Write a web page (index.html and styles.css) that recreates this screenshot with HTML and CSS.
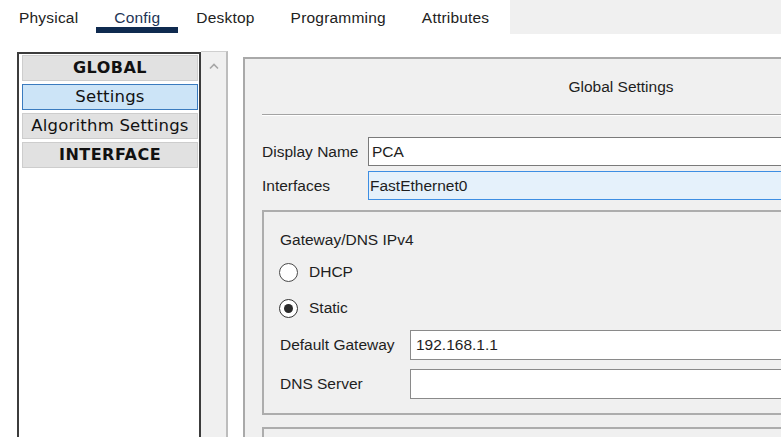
FILE: index.html
```html
<!DOCTYPE html>
<html>
<head>
<meta charset="utf-8">
<link rel="stylesheet" href="styles.css">
</head>
<body>
<div class="tabs">
  <div class="tab-strip">
    <div class="tab">Physical</div>
    <div class="tab active">Config</div>
    <div class="tab">Desktop</div>
    <div class="tab">Programming</div>
    <div class="tab">Attributes</div>
  </div>
  <div class="tab-fill"></div>
</div>
<div class="main">
  <div class="list">
    <div class="item head">GLOBAL</div>
    <div class="item sel">Settings</div>
    <div class="item">Algorithm Settings</div>
    <div class="item head">INTERFACE</div>
  </div>
  <div class="scroll">
    <svg class="chev" width="12" height="8" viewBox="0 0 12 8"><path d="M2 6.5 L6 2.5 L10 6.5" fill="none" stroke="#a6a6a6" stroke-width="1.6"/></svg>
  </div>
  <div class="panel">
    <div class="panel-title">Global Settings</div>
    <div class="row first">
      <span class="lbl">Display Name</span>
      <div class="field name">PCA</div>
    </div>
    <div class="row">
      <span class="lbl">Interfaces</span>
      <div class="field select">FastEthernet0</div>
    </div>
    <div class="group">
      <div class="group-title">Gateway/DNS IPv4</div>
      <div class="radio-row"><span class="radio"></span><span>DHCP</span></div>
      <div class="radio-row"><span class="radio on"></span><span>Static</span></div>
      <div class="row gw">
        <span class="lbl wide">Default Gateway</span>
        <div class="field ip">192.168.1.1</div>
      </div>
      <div class="row dns">
        <span class="lbl wide">DNS Server</span>
        <div class="field ip"></div>
      </div>
    </div>
    <div class="group next"></div>
  </div>
</div>
</body>
</html>
```
FILE: styles.css
```css
html, body {
  margin: 0;
  padding: 0;
  width: 781px;
  height: 437px;
  overflow: hidden;
  background: #ffffff;
}
body {
  font-family: "Liberation Sans", Arial, sans-serif;
  font-size: 15.5px;
  color: #1e1e1e;
}
.tabs {
  display: flex;
  height: 34px;
}
.tab-strip {
  width: 509px;
  padding-left: 1px;
  display: flex;
  background: #ffffff;
}
.tab-fill {
  flex: 1;
  background: #f0f0f0;
}
.tab {
  padding: 8px 18px 0 18px;
  line-height: 19px;
  height: 19px;
  border-bottom: 6px solid transparent;
  color: #222222;
  letter-spacing: 0.2px;
}
.tab.active {
  border-bottom-color: #0f2a4f;
  color: #223456;
}
.main {
  display: flex;
  align-items: stretch;
  padding-top: 17px;
  height: 386px;
  overflow: hidden;
}
.list {
  box-sizing: border-box;
  flex-shrink: 0;
  width: 184px;
  margin-left: 17px;
  margin-top: 1px;
  border: 2px solid #3c3c3c;
  border-bottom: none;
  padding: 1px 1px 0 3px;
  display: flex;
  flex-direction: column;
  gap: 3px;
  background: #ffffff;
  font-family: "DejaVu Sans", Verdana, sans-serif;
  font-size: 16.5px;
  color: #111111;
}
.item {
  box-sizing: border-box;
  height: 26px;
  line-height: 24px;
  text-align: center;
  background: #e1e1e1;
  border: 1px solid #cdcdcd;
  white-space: nowrap;
  letter-spacing: 0.2px;
}
.item.head {
  font-weight: bold;
  font-size: 16px;
  letter-spacing: 0.5px;
}
.item.sel {
  background: #cce4f7;
  border: 1px solid #3a7bbf;
}
.scroll {
  box-sizing: border-box;
  flex-shrink: 0;
  width: 27px;
  background: #f0f0f0;
  border-top: 1px solid #cfcfcf;
  border-right: 2px solid #bdbdbd;
  display: flex;
  justify-content: center;
  align-items: flex-start;
}
.chev {
  margin-top: 10px;
  margin-left: 1px;
}
.panel {
  box-sizing: border-box;
  flex-shrink: 0;
  width: 754px;
  margin-left: 15px;
  margin-top: 6px;
  background: #f0f0f0;
  border-top: 2px solid #a9a9a9;
  border-left: 2px solid #a9a9a9;
  padding: 0 17px;
  overflow: hidden;
}
.panel-title {
  padding: 18px 0 17px 0;
  line-height: 20px;
  text-align: center;
  border-bottom: 1px solid #a3a3a3;
  box-shadow: 0 1px 0 #ffffff;
}
.row {
  display: flex;
  align-items: center;
  margin-top: 5px;
}
.row.first {
  margin-top: 22px;
}
.lbl {
  width: 106px;
  flex-shrink: 0;
  line-height: 20px;
  white-space: nowrap;
}
.lbl.wide {
  width: 130px;
}
.field {
  box-sizing: border-box;
  flex: 1;
  height: 29px;
  line-height: 27px;
  background: #ffffff;
  border: 1px solid #7a7a7a;
  padding-left: 3px;
  white-space: nowrap;
}
.field.select {
  background: #e5f1fb;
  border-color: #3d8ee3;
  padding-left: 1px;
}
.field.ip {
  height: 30px;
  line-height: 28px;
  padding-left: 5px;
  border-color: #8a8a8a;
}
.group {
  box-sizing: border-box;
  margin-top: 10px;
  border: 2px solid #adadad;
  padding: 18px 18px 14px 16px;
}
.group-title {
  line-height: 20px;
}
.radio-row {
  display: flex;
  align-items: center;
  height: 26px;
  margin-top: 10px;
  line-height: 20px;
}
.group-title + .radio-row {
  margin-top: 9px;
}
.radio {
  box-sizing: border-box;
  width: 19px;
  height: 19px;
  border-radius: 50%;
  border: 1.5px solid #4a4a4a;
  background: #ffffff;
  margin-left: -1px;
  margin-right: 11px;
  display: flex;
  align-items: center;
  justify-content: center;
}
.radio.on {
  border-color: #333333;
}
.radio.on::after {
  content: "";
  width: 9px;
  height: 9px;
  border-radius: 50%;
  background: #2a2a2a;
}
.row.gw {
  margin-top: 9px;
}
.row.dns {
  margin-top: 9px;
}
.group.next {
  margin-top: 12px;
  height: 40px;
  padding: 0;
}
```
